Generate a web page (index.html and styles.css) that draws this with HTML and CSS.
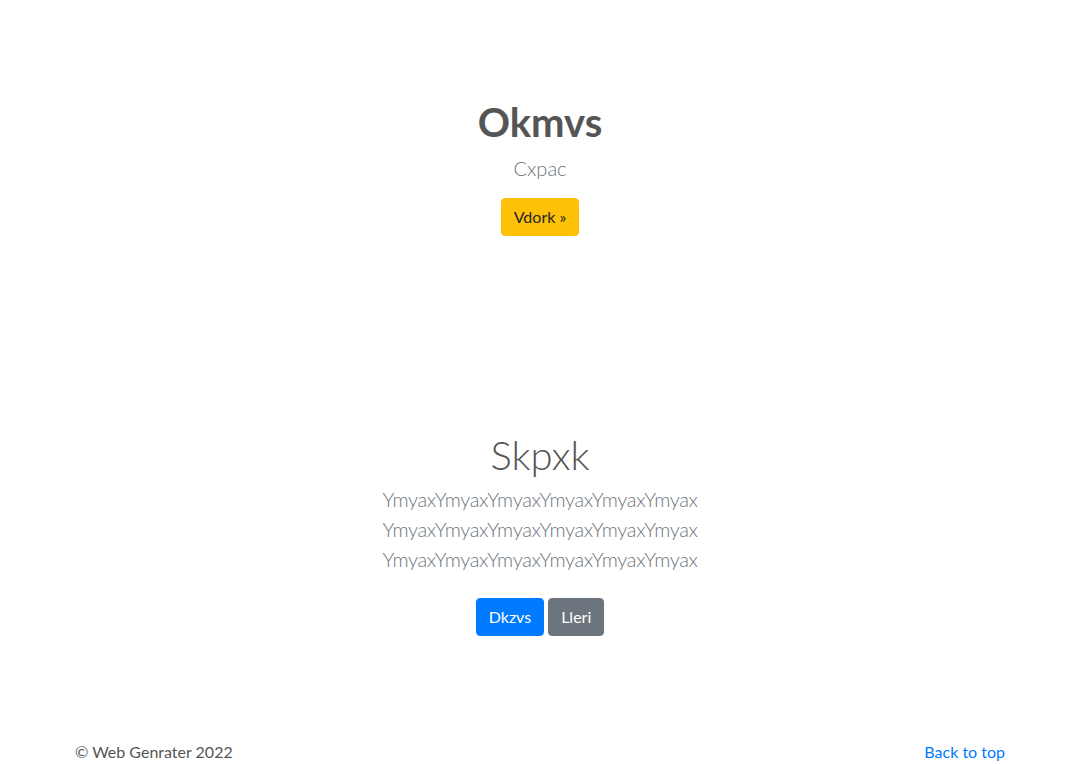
FILE: index.html
```html
<!DOCTYPE html>
<html lang="en">
<head>
<meta charset="utf-8">
<title>Okmvs</title>
<link rel="stylesheet" href="styles.css">
</head>
<body>
<main>
  <section class="hero">
    <h1 class="hero-title">Okmvs</h1>
    <p class="lead muted">Cxpac</p>
    <a class="btn btn-warning" href="#">Vdork »</a>
  </section>
  <section class="feature">
    <h2 class="feature-title">Skpxk</h2>
    <p class="lead muted feature-text">YmyaxYmyaxYmyaxYmyaxYmyaxYmyax<br>YmyaxYmyaxYmyaxYmyaxYmyaxYmyax<br>YmyaxYmyaxYmyaxYmyaxYmyaxYmyax</p>
    <div class="actions">
      <a class="btn btn-primary" href="#">Dkzvs</a>
      <a class="btn btn-secondary" href="#">Lleri</a>
    </div>
  </section>
</main>
<footer class="footer">
  <div class="container footer-row">
    <p class="copy">© Web Genrater 2022</p>
    <a class="link" href="#">Back to top</a>
  </div>
</footer>
</body>
</html>
```

FILE: styles.css
```css
* { box-sizing: border-box; }
html, body { margin: 0; padding: 0; }
body {
  font-family: Lato, "Open Sans", "Liberation Sans", sans-serif;
  font-size: 16px;
  line-height: 1.5;
  color: #555;
  background: #fff;
}
.hero {
  padding-top: 98px;
  text-align: center;
}
.hero-title {
  margin: 0 0 7px;
  font-size: 40px;
  line-height: 48px;
  font-weight: 700;
  color: #555;
}
.lead {
  font-size: 20px;
  line-height: 30px;
  font-weight: 300;
  margin: 0 0 15px;
}
.muted { color: #6c757d; }
.btn {
  display: inline-block;
  padding: 6px 12px;
  font-size: 16px;
  line-height: 24px;
  border-radius: 4px;
  text-decoration: none;
  border: 1px solid transparent;
}
.btn-warning { background: #ffc107; border-color: #ffc107; color: #212529; }
.btn-primary { background: #007bff; border-color: #007bff; color: #fff; }
.btn-secondary { background: #6c757d; border-color: #6c757d; color: #fff; }
.feature {
  padding-top: 195px;
  text-align: center;
}
.feature-title {
  margin: 0 0 5px;
  font-size: 40px;
  line-height: 48px;
  font-weight: 300;
  color: #555;
}
.feature-text {
  margin-bottom: 24px;
  letter-spacing: -0.35px;
}
.actions {
  display: flex;
  justify-content: center;
  gap: 4px;
}
.footer { padding-top: 104px; }
.container {
  max-width: 960px;
  margin: 0 auto;
  padding: 0 15px;
}
.footer-row {
  display: flex;
  justify-content: space-between;
  align-items: center;
}
.copy { margin: 0; }
.link { color: #007bff; text-decoration: none; }
```
